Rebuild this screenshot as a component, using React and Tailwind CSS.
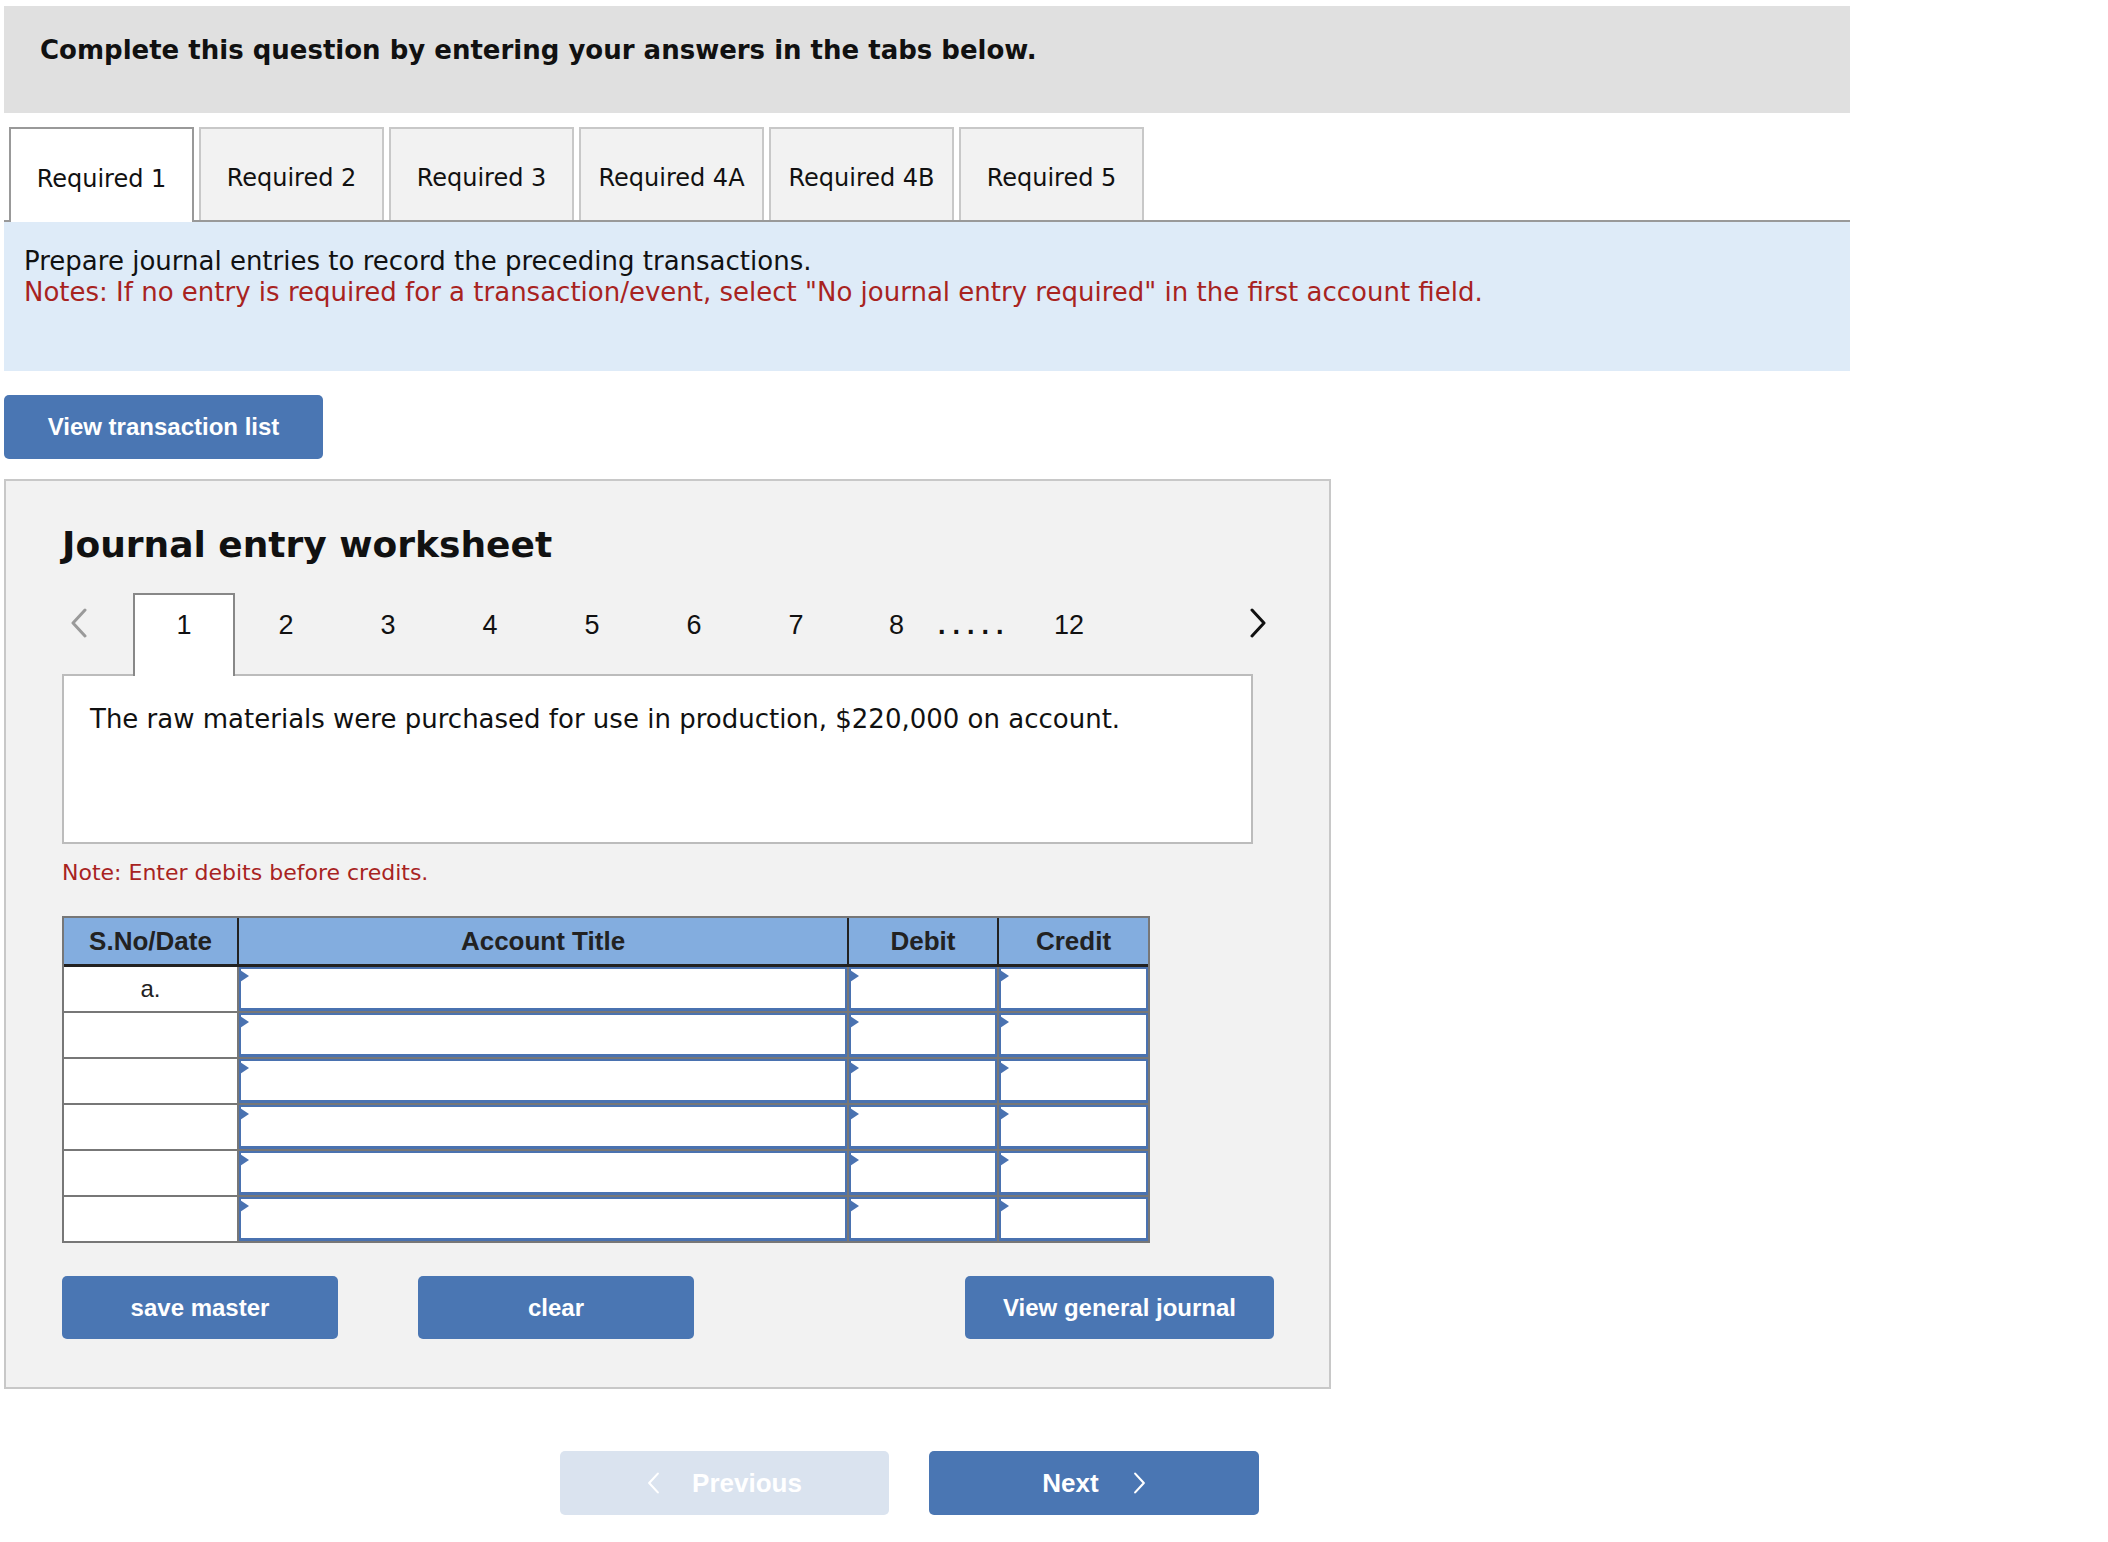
import React from "react";

const tabs = ["Required 1", "Required 2", "Required 3", "Required 4A", "Required 4B", "Required 5"];
const pages = ["1", "2", "3", "4", "5", "6", "7"];

function Chevron({ dir = "right", className = "" }) {
  const points = dir === "right" ? "3,2 15,15 3,28" : "15,2 3,15 15,28";
  return (
    <svg viewBox="0 0 18 30" className={className} fill="none" stroke="currentColor" strokeWidth="3" strokeLinecap="round" strokeLinejoin="round">
      <polyline points={points} />
    </svg>
  );
}

// editable cell: blue framed box with the small dropdown marker at its corner
function InputCell({ width, last }) {
  return (
    <div className={`${width} h-full ${last ? "" : "border-r-2 border-[#777]"}`}>
      <div className="relative h-full bg-white border-2 border-b-[3px] border-[#4a72b0]">
        <span className="absolute left-[-1px] top-[1px] w-0 h-0 border-y-[6px] border-y-transparent border-l-[9px] border-l-[#4a72b0]" />
      </div>
    </div>
  );
}

function JournalTable() {
  const rows = ["a.", "", "", "", "", ""];
  return (
    <div className="w-[1088px] border-2 border-[#777] font-['Liberation_Sans',Arial,sans-serif]">
      <div className="flex h-[49px] bg-[#83addf] border-b-[3px] border-[#222] text-[26px] font-bold text-[#222]">
        <div className="w-[175px] border-r-2 border-[#222] flex items-center justify-center">S.No/Date</div>
        <div className="w-[610px] border-r-2 border-[#222] flex items-center justify-center">Account Title</div>
        <div className="w-[150px] border-r-2 border-[#222] flex items-center justify-center">Debit</div>
        <div className="flex-1 flex items-center justify-center">Credit</div>
      </div>
      {rows.map((label, i) => (
        <div key={i} className={`flex ${i < rows.length - 1 ? "h-[46px] border-b-2 border-[#777]" : "h-[44px]"}`}>
          <div className="w-[175px] h-full bg-white border-r-2 border-[#777] flex items-center justify-center text-[24px] text-[#222]">
            {label}
          </div>
          <InputCell width="w-[610px]" />
          <InputCell width="w-[150px]" />
          <InputCell width="flex-1" last />
        </div>
      ))}
    </div>
  );
}

export default function App() {
  return (
    <div className="w-[2108px] min-h-[1542px] bg-white font-['DejaVu_Sans',Verdana,sans-serif] text-[#111]">
      <div className="pl-[4px] pt-[6px] w-[1850px]">
        {/* question banner */}
        <div className="h-[107px] bg-[#e0e0e0] pl-[36px] pt-[28px]">
          <p className="text-[26px] leading-[32px] font-bold">Complete this question by entering your answers in the tabs below.</p>
        </div>

        {/* requirement tabs */}
        <div className="mt-[14px] flex items-start gap-[5px] pl-[5px] h-[95px] border-b-2 border-[#999]">
          {tabs.map((t, i) => (
            <div
              key={t}
              className={
                i === 0
                  ? "relative z-10 w-[185px] h-[95px] bg-white border-2 border-b-0 border-[#999] flex items-center justify-center pt-[6px] text-[24px]"
                  : "w-[185px] h-[93px] bg-[#f2f2f2] border-2 border-b-0 border-[#c8c8c8] flex items-center justify-center pt-[6px] text-[24px]"
              }
            >
              {t}
            </div>
          ))}
        </div>

        <div className="h-[149px] bg-[#deebf8] pl-[20px] pt-[24px] text-[26px] leading-[31px]">
          <p>Prepare journal entries to record the preceding transactions.</p>
          <p className="text-[#a8231f]">Notes: If no entry is required for a transaction/event, select "No journal entry required" in the first account field.</p>
        </div>

        <button className="mt-[24px] w-[319px] h-[64px] rounded-[5px] bg-[#4a76b3] text-white font-bold text-[24px] font-['Liberation_Sans',Arial,sans-serif]">
          View transaction list
        </button>

        {/* worksheet panel */}
        <div className="mt-[20px] w-[1327px] h-[910px] border-2 border-[#c8c8c8] bg-[#f2f2f2] pl-[56px] pt-[44px]">
          <h2 className="text-[36px] leading-[40px] font-bold">Journal entry worksheet</h2>

          <div className="mt-[28px] h-[81px] flex items-start font-['Liberation_Sans',Arial,sans-serif] text-[27px] leading-[28px] text-[#111]">
            <div className="w-[71px] pt-[15px] pl-[8px]">
              <Chevron dir="left" className="w-[18px] h-[30px] text-[#9a9a9a]" />
            </div>
            <div className="relative z-10 w-[102px] h-[83px] bg-white border-2 border-b-0 border-[#888] flex justify-center pt-[16px]">1</div>
            {pages.slice(1).map((p) => (
              <div key={p} className="w-[102px] flex justify-center pt-[18px]">{p}</div>
            ))}
            <div className="w-[91px] pl-[42px] pt-[18px]">8</div>
            <div className="w-[66px] pt-[18px] font-bold tracking-[7px]">.....</div>
            <div className="ml-[50px] pt-[18px]">12</div>
            <div className="ml-[165px] pt-[15px]">
              <Chevron dir="right" className="w-[18px] h-[30px] text-[#111]" />
            </div>
          </div>

          <div className="w-[1191px] h-[170px] border-2 border-[#bcbcbc] bg-white pl-[26px] pt-[27px] text-[26px] leading-[32px]">
            The raw materials were purchased for use in production, $220,000 on account.
          </div>

          <p className="mt-[16px] text-[22px] leading-[26px] text-[#a8231f]">Note: Enter debits before credits.</p>

          <div className="mt-[30px]">
            <JournalTable />
          </div>

          <div className="mt-[33px] flex font-['Liberation_Sans',Arial,sans-serif] text-[24px] font-bold text-white">
            <button className="w-[276px] h-[63px] rounded-[5px] bg-[#4a76b3]">save master</button>
            <button className="ml-[80px] w-[276px] h-[63px] rounded-[5px] bg-[#4a76b3]">clear</button>
            <button className="ml-[271px] w-[309px] h-[63px] rounded-[5px] bg-[#4a76b3]">View general journal</button>
          </div>
        </div>

        {/* question navigation */}
        <div className="mt-[62px] flex gap-[40px] pl-[556px] font-['Liberation_Sans',Arial,sans-serif] text-[26px] font-bold text-white">
          <button className="w-[329px] h-[64px] rounded-[5px] bg-[#dae3ef] flex items-center justify-center gap-[32px]">
            <Chevron dir="left" className="w-[13px] h-[22px]" />
            <span>Previous</span>
          </button>
          <button className="w-[330px] h-[64px] rounded-[5px] bg-[#4a76b3] flex items-center justify-center gap-[34px]">
            <span>Next</span>
            <Chevron dir="right" className="w-[13px] h-[22px]" />
          </button>
        </div>
      </div>
    </div>
  );
}
